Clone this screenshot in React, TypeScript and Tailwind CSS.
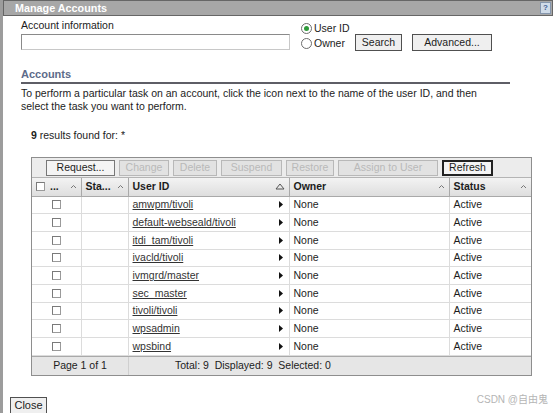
import React from 'react'

const users = [
  'amwpm/tivoli',
  'default-webseald/tivoli',
  'itdi_tam/tivoli',
  'ivacld/tivoli',
  'ivmgrd/master',
  'sec_master',
  'tivoli/tivoli',
  'wpsadmin',
  'wpsbind',
]

const tools = [
  { label: 'Request...', w: 'w-[69px]', state: 'normal' },
  { label: 'Change', w: 'w-[50px]', state: 'off' },
  { label: 'Delete', w: 'w-[44px]', state: 'off' },
  { label: 'Suspend', w: 'w-[61px]', state: 'off' },
  { label: 'Restore', w: 'w-[48px]', state: 'off' },
  { label: 'Assign to User', w: 'w-[100px]', state: 'off' },
  { label: 'Refresh', w: 'w-[51px]', state: 'focus' },
]

function Caret() {
  return (
    <svg width="7" height="5" viewBox="0 0 7 5" className="shrink-0">
      <path d="M1 4 L3.5 1.5 L6 4" fill="none" stroke="#777" strokeWidth="1" />
    </svg>
  )
}

function Box() {
  return <span className="inline-block h-[9px] w-[9px] border border-[#9a9a9a] border-l-[#7a7a7a] border-t-[#7a7a7a] bg-white" />
}

function Radio({ checked }: { checked?: boolean }) {
  return (
    <span className="flex h-[11px] w-[11px] items-center justify-center rounded-full border border-[#6d6d6d] bg-white">
      {checked && <span className="h-[5px] w-[5px] rounded-full bg-[#2e9a3a]" />}
    </span>
  )
}

export default function App() {
  return (
    <div className="relative h-[413px] w-[553px] overflow-hidden border-l-[3px] border-[#9c9c9c] bg-white font-['Liberation_Sans',Arial,sans-serif] text-[10.5px] leading-[13px] text-[#1c1c1c]">
      {/* title bar */}
      <div className="flex h-[16px] items-center justify-between border border-[#666] bg-[#a7a7a7] pl-[11px] pr-[1px]">
        <span className="text-[10.8px] font-bold text-white">Manage Accounts</span>
        <span className="flex h-[12px] w-[11px] items-center justify-center border border-[#8596ad] bg-[#cfdbe8] text-[8px] font-bold leading-none text-[#3f6195]">?</span>
      </div>

      {/* search form */}
      <div className="flex pl-[18px] pt-[3px]">
        <div className="w-[269px]">
          <div className="h-[13px]">Account information</div>
          <div className="mt-[2px] h-[16px] border border-[#8a8a8a] border-r-[#c8c8c8] border-b-[#c8c8c8] bg-white" />
        </div>
        <div className="ml-[11px] w-[54px] pt-[3px]">
          <div className="flex h-[13px] items-center gap-[2px]">
            <Radio checked />
            <span>User ID</span>
          </div>
          <div className="mt-[2px] flex h-[13px] items-center gap-[2px]">
            <Radio />
            <span>Owner</span>
          </div>
        </div>
        <div className="mt-[15px] flex gap-[10px]">
          <button className="h-[17px] w-[47px] border border-[#505050] bg-[#efefef] leading-[15px]">Search</button>
          <button className="h-[17px] w-[80px] border border-[#505050] bg-[#efefef] leading-[15px]">Advanced...</button>
        </div>
      </div>

      {/* accounts section */}
      <div className="pl-[18px]">
        <div className="mt-[17px] h-[16px] w-[489px] border-b-2 border-[#5e5e66] text-[11px] font-bold leading-[13px] text-[#5d6b8a]">Accounts</div>
        <p className="mt-[3px]">
          To perform a particular task on an account, click the icon next to the name of the user ID, and then
          <br />
          select the task you want to perform.
        </p>
        <div className="mt-[16px] pl-[10px]">
          <b>9</b> results found for: *
        </div>

        {/* table */}
        <div className="ml-[10px] mt-[15px] w-[501px] border border-[#8e8e8e]">
          <div className="flex h-[20px] items-center gap-[4px] border-b border-[#b4b4b4] bg-[#ececec] pl-[14px]">
            {tools.map((t) => (
              <span
                key={t.label}
                className={
                  t.w +
                  ' flex h-[16px] items-center justify-center ' +
                  (t.state === 'off'
                    ? 'border border-[#b8b8b8] bg-[#e2e2e2] text-[#b9b9b9]'
                    : t.state === 'focus'
                      ? 'border-2 border-[#222] bg-[#f4f4f4]'
                      : 'border border-[#777] bg-[#f4f4f4]')
                }
              >
                {t.label}
              </span>
            ))}
          </div>
          <table className="w-full table-fixed border-collapse">
            <colgroup>
              <col className="w-[49px]" />
              <col className="w-[47px]" />
              <col className="w-[161px]" />
              <col className="w-[160px]" />
              <col />
            </colgroup>
            <thead>
              <tr className="h-[18px] bg-gradient-to-b from-[#f3f3f3] to-[#dedede] text-left font-bold">
                <th className="border-b border-r border-[#a9a9a9] px-[4px]">
                  <div className="flex items-center">
                    <Box />
                    <span className="ml-[5px] flex-1">...</span>
                    <Caret />
                  </div>
                </th>
                <th className="border-b border-r border-[#a9a9a9] px-[4px]">
                  <div className="flex items-center">
                    <span className="flex-1">Sta...</span>
                    <Caret />
                  </div>
                </th>
                <th className="border-b border-r border-[#a9a9a9] px-[4px]">
                  <div className="flex items-center">
                    <span className="flex-1">User ID</span>
                    <svg width="10" height="7" viewBox="0 0 10 7">
                      <path d="M1 6 L5 1 L9 6 Z" fill="none" stroke="#555" strokeWidth="1" />
                    </svg>
                  </div>
                </th>
                <th className="border-b border-r border-[#a9a9a9] px-[4px]">
                  <div className="flex items-center">
                    <span className="flex-1">Owner</span>
                    <Caret />
                  </div>
                </th>
                <th className="border-b border-[#a9a9a9] px-[4px]">
                  <div className="flex items-center">
                    <span className="flex-1">Status</span>
                    <Caret />
                  </div>
                </th>
              </tr>
            </thead>
            <tbody>
              {users.map((u) => (
                <tr key={u} className="h-[17.7px] border-b border-[#dcdcdc]">
                  <td className="border-r border-[#dcdcdc] text-center">
                    <span className="flex justify-center">
                      <Box />
                    </span>
                  </td>
                  <td className="border-r border-[#dcdcdc]" />
                  <td className="border-r border-[#dcdcdc] px-[4px]">
                    <div className="flex items-center">
                      <span className="flex-1 text-[#333] underline">{u}</span>
                      <svg width="4" height="7" viewBox="0 0 4 7" className="mr-[2px]">
                        <path d="M0 0 L4 3.5 L0 7 Z" fill="#111" />
                      </svg>
                    </div>
                  </td>
                  <td className="border-r border-[#dcdcdc] px-[4px]">None</td>
                  <td className="px-[4px]">Active</td>
                </tr>
              ))}
            </tbody>
          </table>
          <div className="flex h-[19px] items-center border-t border-[#a9a9a9] bg-[#e6e6e6]">
            <span className="w-[96px] text-center">Page 1 of 1</span>
            <span className="h-full border-l border-[#cfcfcf]" />
            <span className="ml-[46px]">Total: 9&nbsp;&nbsp;Displayed: 9&nbsp;&nbsp;Selected: 0</span>
          </div>
        </div>
      </div>

      <button className="ml-[7px] mt-[21px] h-[17px] w-[37px] border border-[#505050] bg-[#efefef] text-[11px] leading-[15px]">Close</button>

      <span className="absolute bottom-[7px] right-[5px] font-['Liberation_Sans','Noto_Sans_CJK_SC',sans-serif] text-[10px] text-[#b5b5b5]">CSDN @自由鬼</span>
    </div>
  )
}
